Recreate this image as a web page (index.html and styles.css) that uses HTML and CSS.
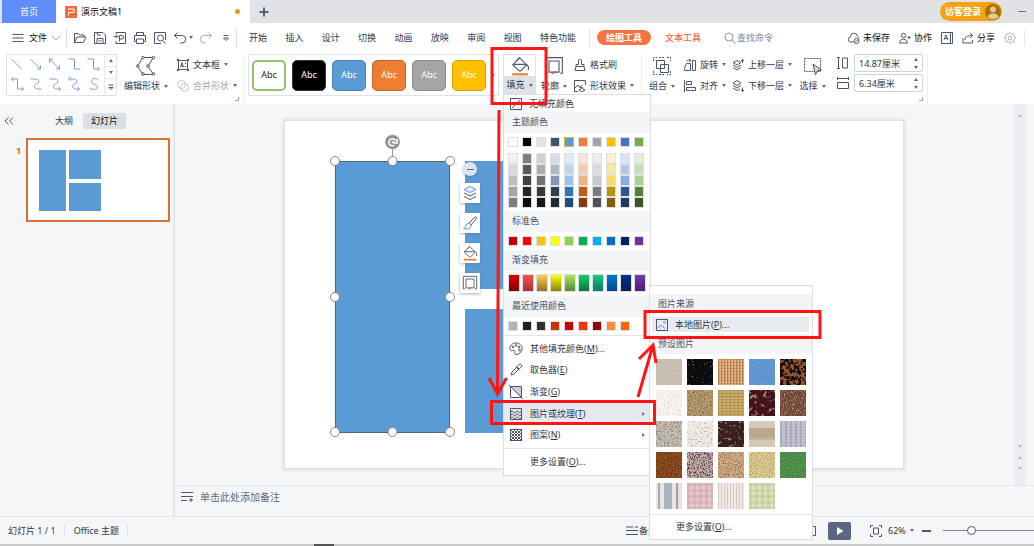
FILE: index.html
```html
<!DOCTYPE html>
<html lang="zh-CN">
<head>
<meta charset="utf-8">
<title>演示文稿1</title>
<link rel="stylesheet" href="styles.css">
</head>
<body>
<svg class="defs" aria-hidden="true">
  <symbol id="bucket" viewBox="0 0 18 18"><path d="M3 7.500h11.500M8.500 1.500 15 8l-5.500 5.500h-1L2.500 8zM15 7.500l1.500 2v3M6 4.500 8.500 2"/><path class="accent" d="M2 16.500h14"/></symbol>
  <symbol id="frame" viewBox="0 0 18 18"><path d="M4.500 4.500h9v10h-9zM1.500 15V1.500h15V15M1 15.500h2.500M14.500 15.500H17"/><path class="red" d="m7 16 4-2"/></symbol>
  <symbol id="layers" viewBox="0 0 16 16"><path class="blue tint" d="m8 1.500 6 3-6 3-6-3z"/><path d="m2 8 6 3 6-3M2 11.500l6 3 6-3"/></symbol>
  <symbol id="picture" viewBox="0 0 12 12"><path d="M.5.500h11v11H.5z"/><path class="blue" d="m2 9 2.500-3L9 9.500"/><circle class="blue" cx="8.500" cy="3.500" r="1"/></symbol>
</svg>

<header class="tabbar">
  <button class="home-tab">首页</button>
  <div class="doc-tab">
    <svg class="logo" viewBox="0 0 12 12"><rect width="12" height="12" rx="1"/><path d="M3 3h6v3.500H3.500V9.500"/></svg>
    <span>演示文稿1</span><i class="dirty"></i>
  </div>
  <button class="new-tab" aria-label="新建"><svg class="ico s10" viewBox="0 0 10 10"><path d="M5 .5v9M.5 5h9"/></svg></button>
  <div class="window-tools">
    <button class="login">访客登录<svg viewBox="0 0 16 16"><circle class="av-bg" cx="8" cy="8" r="8"/><circle class="av" cx="8" cy="5.500" r="3"/><path class="av" d="M2.500 13c1-5 10-5 11 0a8 8 0 0 1-11 0z"/></svg></button>
    <button class="minimize" aria-label="最小化"></button>
  </div>
</header>

<nav class="menubar">
  <button class="file"><svg class="ico s12" viewBox="0 0 12 12"><path d="M.5 2.500h11M.5 6h11M.5 9.500h11"/></svg>文件<svg class="ico s8 pale" viewBox="0 0 8 8"><path d="m.5 2.500 3.500 3.500L7.500 2.500"/></svg></button>
  <div class="quick">
    <button aria-label="打开"><svg class="ico s14" viewBox="0 0 14 14"><path d="M1.500 11.500v-9h3.500l1.500 1.500h4.500v2M1.500 11.500l2.500-5.500h9l-2.500 5.500z"/></svg></button>
    <button aria-label="保存"><svg class="ico s14" viewBox="0 0 14 14"><path d="M1.500 12.500v-11h8.500l2.500 2.500v8.500zM4 12.500V7.500h6v5M4.500 1.500v2.500h3.500M5.500 10h3"/></svg></button>
    <button aria-label="输出为PDF"><svg class="ico s14" viewBox="0 0 14 14"><path d="M3 3V1.500h9.500v11H3V10M.5 5.500h4M3 3.500l2 2-2 2M6.500 10.500V4.500h2.500a1.500 1.500 0 0 1 0 3.500H6.500"/></svg></button>
    <button aria-label="打印"><svg class="ico s14" viewBox="0 0 14 14"><path d="M3.500 4.500v-3h7v3M3.500 10.500h-2v-6h11v6h-2M3.500 8h7v4.500h-7z"/></svg></button>
    <button aria-label="打印预览"><svg class="ico s14" viewBox="0 0 14 14"><path d="M12.500 9V1.500h-11v11H8M9.500 9.500l3 3"/><circle cx="7.500" cy="7" r="3"/></svg></button>
    <button class="undo" aria-label="撤销"><svg class="ico s14" viewBox="0 0 14 14"><path d="M4.500 1.500 1.500 4.500l3 3M1.500 4.500h7.500a3.500 3.500 0 0 1 0 7.500H7"/></svg><i class="caret"></i></button>
    <button aria-label="恢复"><svg class="ico s14 pale" viewBox="0 0 14 14"><path d="m9.500 1.500 3 3-3 3M12.500 4.500H5a3.500 3.500 0 0 0 0 7.500h2"/></svg></button>
    <button class="quick-more" aria-label="更多"><svg class="ico s8" viewBox="0 0 8 8"><path d="M1.500 1.500h5M1.500 4 4 6.500 6.500 4z"/></svg></button>
  </div>
  <div class="menus">
    <button>开始</button><button>插入</button><button>设计</button><button>切换</button><button>动画</button><button>放映</button><button>审阅</button><button>视图</button><button>特色功能</button>
  </div>
  <div class="context">
    <button class="pill">绘图工具</button><button class="text-tool">文本工具</button>
    <label class="search"><svg class="ico s12" viewBox="0 0 12 12"><circle cx="5" cy="5" r="4"/><path d="m8 8 3.500 3.500"/></svg><input placeholder="查找命令" aria-label="查找命令"></label>
  </div>
  <div class="account">
    <button><svg class="ico s12" viewBox="0 0 12 12"><path d="M5.500 10H3a2.500 2.500 0 0 1-.5-5 3.500 3.500 0 0 1 7-.5A2.500 2.500 0 0 1 11 6.500"/><circle cx="8.500" cy="9" r="2.500"/><path d="m7 10.500 3-3"/></svg>未保存</button>
    <button><svg class="ico s12" viewBox="0 0 12 12"><circle cx="4.500" cy="3.500" r="2.200"/><path d="M.5 11c0-5 8-5 8 0zM8.500 5.500h3M10 4v3"/></svg>协作</button>
    <button aria-label="字体"><svg class="ico s12" viewBox="0 0 12 12"><path d="M.5.5h11v11H.5zM9.500.5v11M3 8l2-5 2 5M3.500 6.500h3"/></svg></button>
    <button><svg class="ico s12" viewBox="0 0 12 12"><path d="M1 6v5h9.500V8M3 8c0-3 2-4.500 7-4.500M8 1l2.800 2.500L8 6"/></svg>分享</button>
    <button aria-label="设置"><svg class="ico s12 pale" viewBox="0 0 12 12"><path d="M6 .7 7.600 2l2.100 0 .6 2 1.200 2-1.200 2-.6 2-2.100 0L6 11.300 4.400 10l-2.100 0-.6-2L.5 6l1.200-2 .6-2 2.100 0z"/><circle cx="6" cy="6" r="2"/></svg></button>
  </div>
</nav>

<section class="ribbon">
  <div class="shape-gallery">
    <svg class="lines" viewBox="0 0 96 40">
      <path d="m4 4 10 10M23 4l10 10m0-3.500v3.500h-3.500M42 4l10 10m0-3.500v3.500h-3.500M42 7.500V4h3.500M61 4h6v10h6M80 4h6v10h6m-2-2 2 2-2 2M4 24h6v10h6m-2-2 2 2-2 2M6 22 4 24l2 2M23 24h4c6 0 5 4 2 5s-3 5 2 5h3M42 24h4c6 0 5 4 2 5s-3 5 2 5h3m-2-2 2 2-2 2M61 24h4c6 0 5 4 2 5s-3 5 2 5h3m-2-2 2 2-2 2M63 22l-2 2 2 2M91 25c-3-3-8-1-7 2s6 2 6 5-5 3-8 1"/>
    </svg>
    <div class="spin"><button aria-label="上"><i class="caret up"></i></button><button aria-label="下"><i class="caret"></i></button><button aria-label="更多形状"><svg class="ico s8" viewBox="0 0 8 8"><path d="M1.500 2h5M2 4.500 4 6.500 6 4.500z"/></svg></button></div>
  </div>
  <button class="big"><svg class="ico s20" viewBox="0 0 20 20"><path d="M7 1.500h10.500L12 10l5.500 8.500H7L1.500 10z"/><g class="dot"><circle cx="7" cy="1.500" r="1.300"/><circle cx="17.500" cy="1.500" r="1.300"/><circle cx="12" cy="10" r="1.300"/><circle cx="17.500" cy="18" r="1.300"/><circle cx="7" cy="18" r="1.300"/><circle cx="1.800" cy="10" r="1.300"/></g></svg><span>编辑形状<i class="caret"></i></span></button>
  <div class="stack ruled">
    <button><svg class="ico s12" viewBox="0 0 12 12"><path d="M1.500 1.500h9v9h-9zM3.500 8.500l1.500-5 1.500 5M4 7h2M8.500 4v1M8.500 7v1"/><path d="M0 .5h2M.5 0v2M10 .5h2M11.500 0v2M0 11.500h2M.5 10v2M10 11.500h2M11.500 10v2"/></svg>文本框<i class="caret"></i></button>
    <button class="disabled" disabled><svg class="ico s12" viewBox="0 0 12 12"><circle cx="4.500" cy="4.500" r="4"/><circle cx="7.500" cy="7.500" r="4"/></svg>合并形状<i class="caret"></i></button>
    <i class="corner"></i>
  </div>
  <div class="style-col">
    <div class="styles">
      <button class="st s-outline">Abc</button><button class="st s-black">Abc</button><button class="st s-blue">Abc</button><button class="st s-orange">Abc</button><button class="st s-gray">Abc</button><button class="st s-yellow">Abc</button>
      <i class="caret"></i>
    </div>
  </div>
  <button class="big fill-btn"><svg class="ico s20"><use href="#bucket"/></svg><span>填充<i class="caret"></i></span></button>
  <button class="big"><svg class="ico s20"><use href="#frame"/></svg><span>轮廓<i class="caret"></i></span></button>
  <div class="stack ruled">
    <button><svg class="ico s12" viewBox="0 0 12 12"><path d="M4.500 5.500V1.500a1.500 1.500 0 0 1 3 0v4h2.500v2H2v-2zM2 7.500l-1 4h10l-1-4"/></svg>格式刷</button>
    <button><svg class="ico s12" viewBox="0 0 12 12"><path d="M11.500 5V.5H.5v11H4M1 8l3-3 2 3 2-3M8 7l1 2 2 1-2 1-1 1.500-1-1.500-2-1 2-1z"/></svg>形状效果<i class="caret"></i></button>
  </div>
  <button class="big"><svg class="ico s20" viewBox="0 0 20 20"><path d="M4.500 4.500h8v8h-8zM8.500 8.500h8v8h-8z"/><path class="dash" d="M1.500 5V1.500H5M15 1.500h3.500V5M1.500 15v3.500H5M18.500 15v3.500H15M7 1.500h6M7 18.500h6"/></svg><span>组合<i class="caret"></i></span></button>
  <div class="stack">
    <button><svg class="ico s12" viewBox="0 0 12 12"><path d="M6.500 4.500v7h-6v-2l2-5zM8.500 1.500h3v10h-3zM2.500 2.500c1-2 3-2 4.500-1M5 3l2-1.500L5.500 0"/></svg>旋转<i class="caret"></i></button>
    <button><svg class="ico s12" viewBox="0 0 12 12"><path d="M.5 0v12M2.500 1.500h5v3h-5zM2.500 7.500h9v3h-9z"/></svg>对齐<i class="caret"></i></button>
  </div>
  <div class="stack">
    <button><svg class="ico s12" viewBox="0 0 12 12"><path d="m5 1.500 4 2-4 2.500-4-2.500zM1 6l4 2.500L9 6M1 8.500 5 11l4-2.500M10.500 4V.5M9 2 10.500.5 12 2"/></svg>上移一层<i class="caret"></i></button>
    <button><svg class="ico s12" viewBox="0 0 12 12"><path d="m5 .5 4 2.500-4 2.500L1 3zM1 5.500 5 8l4-2.500M1 8l4 2.500L8 9M10.500 7.500v4M9 10l1.500 1.500L12 10"/></svg>下移一层<i class="caret"></i></button>
  </div>
  <button class="big"><svg class="ico s20" viewBox="0 0 20 20"><path class="dash" d="M1.500 2.500h16v13h-16z"/><path class="pointer" d="m10 8 8.500 6-4 .8-2 4z"/></svg><span>选择<i class="caret"></i></span></button>
  <div class="size-col ruled">
    <label><svg class="ico s12" viewBox="0 0 12 12"><path d="M0 .5h3M0 11.500h3M1.500.5v11M5.500 1h5v10h-5z"/></svg><input value="14.87厘米" aria-label="高度"><span class="updown"><i class="caret up"></i><i class="caret"></i></span></label>
    <label><svg class="ico s12" viewBox="0 0 12 12"><path d="M.5 0v3M11.500 0v3M.5 1.500h11M.5 5.500h11v6H.5z"/></svg><input value="6.34厘米" aria-label="宽度"><span class="updown"><i class="caret up"></i><i class="caret"></i></span></label>
    <i class="corner"></i>
  </div>
</section>

<main class="workspace">
  <aside class="side">
    <div class="side-head"><button class="collapse" aria-label="收起"><svg class="ico s10" viewBox="0 0 10 10"><path d="M4.500 1.500 1 5l3.500 3.500M9 1.500 5.500 5 9 8.500"/></svg></button><button class="side-tab">大纲</button><button class="side-tab on">幻灯片</button></div>
    <div class="thumb-row"><b>1</b><div class="thumb"><i class="t1"></i><i class="t2"></i><i class="t3"></i></div></div>
  </aside>
  <div class="editor">
    <div class="canvas">
      <div class="slide">
        <div class="shape a"></div><div class="shape b"></div><div class="shape c"></div>
        <svg class="handles" viewBox="0 0 130 314">
          <path class="stem" d="M64.500 20v18"/><rect x="7.500" y="38.500" width="114" height="271"/>
          <circle class="rot" cx="64.500" cy="19" r="7"/><path class="rot-a" d="M67.500 18a3.500 3.500 0 1 0-1 4M69 16v4h-4"/><circle class="pt" cx="64.500" cy="19" r="1"/>
          <g class="h"><circle cx="7" cy="38" r="4.500"/><circle cx="64.500" cy="38" r="4.500"/><circle cx="122" cy="38" r="4.500"/><circle cx="7" cy="174" r="4.500"/><circle cx="122" cy="174" r="4.500"/><circle cx="7" cy="309" r="4.500"/><circle cx="64.500" cy="309" r="4.500"/><circle cx="122" cy="309" r="4.500"/></g>
        </svg>
        <div class="float">
          <button class="minus" aria-label="收起"></button>
          <button aria-label="层"><svg class="ico s16"><use href="#layers"/></svg></button>
          <button aria-label="画笔"><svg class="ico s16" viewBox="0 0 16 16"><path d="M7 8 13 2c1-1 2 .5 1.500 1.500L9 10z"/><path class="blue" d="M7 8c-3 0-2.500 4-5.500 5.500C5 14.500 9 14 9 10z"/></svg></button>
          <button aria-label="填充"><svg class="ico s16"><use href="#bucket"/></svg></button>
          <button aria-label="轮廓"><svg class="ico s16"><use href="#frame"/></svg></button>
        </div>
      </div>
      <div class="scroll"><i class="caret up"></i><span></span><i class="caret"></i><i class="caret up"></i><i class="caret"></i></div>
    </div>
    <div class="notes"><svg class="ico s12" viewBox="0 0 12 12"><path d="M0 1.500h12M0 5.500h12M0 9.500h6M10 7v4M8 9h4"/></svg>单击此处添加备注</div>
  </div>
</main>

<footer class="status">
  <span class="cell">幻灯片 1 / 1</span><span class="cell">Office 主题</span>
  <div class="views">
    <button class="remark"><svg class="ico s12" viewBox="0 0 12 12"><path d="M0 2h7M0 5.500h12M0 9.500h12M9 3l1.500-2L12 3"/></svg>备注</button>
    <button class="read" aria-label="阅读视图"><svg class="ico s12" viewBox="0 0 12 12"><path d="M.5 1.500h11v9H.5z"/></svg></button>
    <button class="play" aria-label="放映"><svg viewBox="0 0 10 10"><path d="m2 1 6.500 4L2 9z"/></svg></button>
    <button class="fit" aria-label="适应"><svg class="ico s12" viewBox="0 0 12 12"><path d="M.5 3V.5H3M9 .5h2.500V3M.5 9v2.500H3M11.500 9v2.500H9M3.500 3h5v6h-5z"/></svg></button>
    <button class="zoom">62%<i class="caret"></i></button>
    <button class="zoom-out" aria-label="缩小"></button>
    <input type="range" class="zoom-range" min="0" max="100" value="29" aria-label="缩放">
  </div>
</footer>
<div class="dock"><i></i></div>

<div class="menu fill-menu">
  <button class="nofill"><svg class="ico s12" viewBox="0 0 12 12"><path d="M.5.5h11v11H.5z"/><path class="red" d="m2 10 8-8"/></svg>无填充颜色</button>
  <h3>主题颜色</h3>
  <div class="swatches" data-palette="theme"></div>
  <div class="swatches shades" data-palette="shades"></div>
  <h3>标准色</h3>
  <div class="swatches" data-palette="standard"></div>
  <h3>渐变填充</h3>
  <div class="swatches grads" data-palette="gradient"></div>
  <h3>最近使用颜色</h3>
  <div class="swatches" data-palette="recent"></div>
  <div class="items">
    <button><svg class="ico s14" viewBox="0 0 14 14"><path d="M7 1C3 1 .8 4 .8 6.500c0 2 1.500 2.500 3 2s2.500.5 2 2 .5 2.500 2 2c3-.8 5.400-3 5.400-6C13.200 3.500 10.500 1 7 1z"/><circle cx="4" cy="5" r=".9"/><circle cx="7" cy="3.500" r=".9"/><circle cx="10" cy="5" r=".9"/><circle cx="10.500" cy="8" r=".9"/></svg><span>其他填充颜色(<u>M</u>)...</span></button>
    <button><svg class="ico s14" viewBox="0 0 14 14"><path d="M7.500 4.500 3 9l-1 3 3-1 4.500-4.500M6.500 3.500l4 4M8 4l2-2.500c1.500-1 3.500.5 2.500 2.500L10 6z"/></svg><span>取色器(<u>E</u>)</span></button>
    <button><svg class="ico s14" viewBox="0 0 14 14"><path class="shade" d="M1.500 1.500h11v11z"/><path d="M1.500 1.500h11v11h-11zM0 0l14 14"/></svg><span>渐变(<u>G</u>)</span></button>
    <button class="on"><svg class="ico s14" viewBox="0 0 14 14"><path d="M1.500 1.500h11v11h-11zM2 5q1.250-2 2.500 0t2.500 0 2.500 0 2.500 0M2 8q1.250-2 2.500 0t2.500 0 2.500 0 2.500 0M2 11q1.250-2 2.500 0t2.500 0 2.500 0 2.500 0"/></svg><span>图片或纹理(<u>T</u>)</span><i class="caret right"></i></button>
    <button><svg class="ico s14" viewBox="0 0 14 14"><path d="M1.500 1.500h11v11h-11zM1 4l3-3M1 7l6-6M1 10l9-9M1 13 13 1M4 13l9-9M7 13l6-6M10 13l3-3M10 1l3 3M7 1l6 6M4 1l9 9M1 1l12 12M1 4l9 9M1 7l6 6M1 10l3 3"/></svg><span>图案(<u>N</u>)</span><i class="caret right"></i></button>
  </div>
  <button class="more">更多设置(<u>O</u>)...</button>
</div>

<div class="menu pic-menu">
  <h3>图片来源</h3>
  <button class="local"><svg class="ico s12"><use href="#picture"/></svg><span>本地图片(<u>P</u>)...</span></button>
  <h3>预设图片</h3>
  <div class="textures"></div>
  <button class="more">更多设置(<u>O</u>)...</button>
</div>

<svg class="marks" viewBox="0 0 1034 546" aria-hidden="true">
  <path d="M492 48.500h54v55h-54zM491.500 401.500h163v22h-163zM645 311.500h175v26H645z"/>
  <path d="M499 110l-1.500 283M489 378l8.500 16 9-16M638 397l15-52M639 359l14-14 3 18"/>
</svg>
<script src="app.js"></script>
</body>
</html>
```

FILE: styles.css
```css
* { box-sizing: border-box; }
body {
  margin: 0; min-height: 100vh; display: flex; flex-direction: column; position: relative;
  overflow: hidden; background: #fff; color: #2f3747;
  font: 9px/14px "Noto Sans", "Noto Sans CJK SC", sans-serif;
}
button, input { font: inherit; color: inherit; border: 0; padding: 0; margin: 0; background: none; }
button { display: flex; align-items: center; white-space: nowrap; }
h3 { margin: 0; font: inherit; }
u { text-underline-offset: 1px; }
.defs { position: absolute; width: 0; height: 0; }

.ico { display: block; flex: none; fill: none; stroke: #4c556b; stroke-width: 1; }
.s8 { width: 8px; height: 8px; }
.s10 { width: 10px; height: 10px; }
.s12 { width: 12px; height: 12px; }
.s14 { width: 14px; height: 14px; }
.s16 { width: 16px; height: 16px; }
.s20 { width: 20px; height: 20px; }
.pale { stroke: #a9aeb8; }
.accent { stroke: #ed7d31; stroke-width: 2; }
.red { stroke: #f03c3c; }
.blue { stroke: #5b8ce8; }
.tint { fill: #e9f1ff; }
.dash { stroke-dasharray: 2 1; }
.dot { fill: #fff; }
.pointer { fill: #d5dae2; }
.shade { fill: #c9ced8; stroke: none; }

.caret { display: inline-block; flex: none; width: 0; height: 0; border: 2px solid transparent; border-top: 3px solid #5d6b86; border-bottom: 0; }
.caret.up { border-top: 0; border-bottom: 3px solid #5d6b86; }
.caret.right { border: 2px solid transparent; border-left: 3px solid #6c7890; border-right: 0; }

/* Tab bar */
.tabbar { display: flex; height: 23px; background: #e1e2e6; padding-left: 2px; }
.home-tab { width: 54px; justify-content: center; background: #5f8dfa; color: #fff; }
.doc-tab { display: flex; align-items: center; width: 194px; padding: 0 10px 0 9px; gap: 4px; background: #fff; color: #111; }
.logo { width: 12px; height: 12px; }
.logo rect { fill: #f06a40; }
.logo path { fill: none; stroke: #fff; stroke-width: 1; }
.dirty { margin-left: auto; width: 5px; height: 5px; border-radius: 50%; background: #e8990c; }
.new-tab { padding: 0 9px; }
.new-tab .ico { stroke-width: 2; stroke: #56617c; }
.window-tools { margin-left: auto; display: flex; align-items: center; }
.login { height: 19px; padding: 0 1px 0 5px; gap: 4px; border-radius: 10px; background: #f6a313; color: #fff; font-weight: 700; }
.login svg { width: 16px; height: 16px; }
.av-bg { fill: #a86e08; }
.av { fill: #e2c891; }
.minimize { width: 8px; height: 1px; background: #6b7588; margin: 0 8px 0 16px; }

/* Menu bar */
.menubar { display: flex; align-items: center; height: 29px; }
.file { gap: 5px; height: 18px; padding: 0 6px 0 12px; border-right: 1px solid #d9dce2; color: #111; }
.quick { display: flex; align-items: center; gap: 6px; height: 18px; padding: 0 6px; border-right: 1px solid #d9dce2; }
.undo { gap: 2px; }
.quick-more { padding-left: 3px; }
.menus { display: flex; justify-content: space-between; width: 353px; height: 18px; padding: 0 13px 0 12px; border-right: 1px solid #e0e2e7; }
.context { display: flex; align-items: center; margin-left: 7px; }
.pill { height: 15px; padding: 0 9px; border-radius: 8px; background: #f7733f; color: #fff; font-weight: 700; }
.text-tool { margin-left: 14px; color: #f0683a; font-weight: 500; }
.search { display: flex; align-items: center; margin-left: 23px; gap: 1px; }
.search .ico { stroke: #8a96ac; }
.search input { width: 50px; }
.search input::placeholder { color: #7b869b; opacity: 1; }
.account { display: flex; align-items: center; margin-left: auto; gap: 9px; padding-right: 8px; height: 16px; margin-right: 9px; border-right: 1px solid #e5e7eb; }
.account button { gap: 3px; color: #111; }

/* Ribbon */
.ribbon {
  display: grid; height: 52px; padding: 2px 0 0 6px;
  grid-template-columns: 111px 58px 69px 259px 33px 36px 70px 40px 48px 62px 41px 95px 1fr;
}
.ruled { border-right: 1px solid #eceef1; }
.shape-gallery { display: flex; height: 42px; border: 1px solid #dfe1e5; }
.lines { flex: 1; min-width: 0; fill: none; stroke: #7f9bd4; stroke-width: 1; }
.spin { display: grid; width: 12px; border-left: 1px solid #e6e8ec; }
.spin button { justify-content: center; border-bottom: 1px solid #e6e8ec; }
.spin button:last-child { border: 0; }
.big { flex-direction: column; align-items: center; height: 40px; padding-top: 2px; justify-content: space-between; }
.big span { display: flex; align-items: center; gap: 4px; line-height: 16px; }
.fill-btn { background: linear-gradient(#fff 21px, #dde2e8 21px); border: 1px solid #dde2e8; padding-top: 1px; }
.stack { position: relative; display: grid; grid-template-rows: 21px 21px; padding-left: 2px; align-content: start; }
.stack button { gap: 4px; }
.disabled { color: #a4a9b3; }
.disabled .ico { stroke: #c0c4cc; }
.corner { position: absolute; right: 4px; bottom: 3px; width: 4px; height: 4px; border: solid #9aa3b5; border-width: 0 1px 1px 0; }
.style-col { padding: 0 4px; }
.styles { display: flex; align-items: center; gap: 6px; height: 42px; padding-left: 3px; border: 1px solid #dfe1e5; }
.styles .caret { margin-left: -1px; }
.st { width: 34px; height: 31px; justify-content: center; border: 1px solid; border-radius: 5px; color: #fff; }
.s-outline { border: 2px solid #8fc36f; color: #222; }
.s-black { background: #000; border-color: #333; }
.s-blue { background: #5b9bd5; border-color: #4a83b8; }
.s-orange { background: #ed7d31; border-color: #c4682a; }
.s-gray { background: #a5a5a5; border-color: #8b8b8b; }
.s-yellow { background: #ffc000; border-color: #d3a106; }
.size-col { position: relative; display: flex; flex-direction: column; gap: 2px; padding: 0 5px 0 4px; }
.size-col label { position: relative; display: flex; align-items: center; gap: 5px; }
.size-col input { width: 69px; height: 18px; padding-left: 4px; border: 1px solid #ccd0d7; border-radius: 2px; }
.updown { position: absolute; right: 4px; display: grid; gap: 5px; }

/* Workspace */
.workspace { flex: 1; display: flex; background: #f5f6f8; }
.side { width: 175px; border-right: 2px solid #e3e5ee; }
.side-head { display: flex; align-items: center; padding: 9px 0 0 4px; }
.side-tab { padding: 0 10px; height: 16px; border-radius: 2px; }
.collapse { margin-right: 31px; }
.side-tab.on { background: #dadfe6; padding: 0 8px; color: #111; }
.thumb-row { display: flex; gap: 4px; margin-top: 9px; padding: 0 3px 0 16px; }
.thumb-row b { width: 6px; padding-top: 6px; color: #d0642b; }
.thumb { position: relative; flex: 1; height: 84px; border: 2px solid #da7038; background: #fff; }
.thumb i { position: absolute; background: #5b9bd5; }
.t1 { left: 11px; top: 10px; width: 27px; height: 61px; }
.t2 { left: 41px; top: 10px; width: 32px; height: 29px; }
.t3 { left: 41px; top: 43px; width: 32px; height: 28px; }
.editor { flex: 1; min-width: 0; display: flex; flex-direction: column; }
.canvas { flex: 1; display: flex; padding-right: 8px; }
.slide { position: relative; flex: 1; margin: 17px 111px 17px 110px; background: #fff; box-shadow: 0 0 3px 2px #dcdde0; }
.shape { position: absolute; background: #5b9bd5; }
.a { left: 50px; top: 40px; width: 115px; height: 272px; }
.b { left: 180px; top: 40px; width: 142px; height: 128px; }
.c { left: 180px; top: 188px; width: 142px; height: 124px; }
.handles { position: absolute; left: 43px; top: 2px; width: 130px; height: 314px; overflow: visible; fill: none; stroke: #51657a; }
.handles .stem { stroke: #999; }
.handles .rot { fill: #8f8f8f; stroke: #aaa; }
.handles .rot-a { stroke: #fff; stroke-width: 1.5; }
.handles .pt { fill: #fff; stroke: none; }
.handles .h { fill: #fff; stroke: #858585; }
.float { position: absolute; left: 175px; top: 41px; display: flex; flex-direction: column; align-items: center; gap: 10px; }
.float button { width: 20px; height: 20px; justify-content: center; background: #fff; box-shadow: 0 1px 3px #5a6b8088; }
.float .minus { width: 14px; height: 14px; border-radius: 50%; background: #dbe6f0; margin-bottom: -3px; }
.minus::after { content: ""; width: 7px; height: 1px; background: #667; }
.scroll { display: flex; flex-direction: column; align-items: center; gap: 8px; width: 12px; padding: 10px 0 15px; background: #eceef3; }
.scroll span { flex: 1; }
.scroll .caret { opacity: .4; }
.notes { display: flex; align-items: center; gap: 7px; height: 31px; padding: 0 6px 8px; border-top: 1px solid #dfe2ea; font-size: 10px; color: #626b7c; }

/* Status bar */
.status { display: flex; align-items: center; height: 28px; padding-left: 8px; background: #f5f6f8; border-top: 1px solid #e0e3ea; }
.cell { padding-right: 8px; margin-right: 9px; line-height: 12px; border-right: 1px solid #dde0e6; }
.views { display: flex; align-items: center; margin-left: auto; }
.remark { gap: 1px; margin-right: 147px; }
.read { margin-right: 12px; }
.play { width: 23px; height: 18px; justify-content: center; border-radius: 2px; background: #5c6683; margin-right: 19px; }
.play svg { width: 10px; height: 10px; fill: #fff; }
.fit { margin-right: 6px; }
.zoom { gap: 4px; width: 27px; }
.zoom-out { width: 9px; height: 2px; background: #4c556b; margin: 0 12px 0 7px; }
.zoom-range { appearance: none; width: 91px; height: 10px; }
.zoom-range::-webkit-slider-runnable-track { height: 1px; background: #7d8596; }
.zoom-range::-webkit-slider-thumb { appearance: none; width: 9px; height: 9px; margin-top: -4px; border: 1px solid #4c556b; border-radius: 50%; background: #fff; }
.dock { height: 2px; background: #c9c9c9; padding-left: 314px; }
.dock i { display: block; width: 20px; height: 2px; background: #555; }

/* Drop-down menus */
.menu { position: absolute; background: #fff; border: 1px solid #dadde2; }
.menu h3 { background: #f3f4f6; color: #4a5262; padding-left: 8px; height: 21px; line-height: 20px; }
.fill-menu { left: 503px; top: 94px; width: 148px; }
.nofill { height: 17px; padding-left: 6px; gap: 7px; }
.swatches { display: grid; grid-template-columns: repeat(10, 10px); gap: 4px; padding: 4px 0 4px 4px; }
.swatches button { height: 10px; border: 1px solid #dcdfe3; }
.swatches .picked { border-color: #f0b030; }
.shades { padding: 2px 0 3px 4px; row-gap: 0; }
.shades button { height: 11px; }
.grads { grid-template-columns: repeat(10, 12px); gap: 2px; padding: 3px 0 4px 4px; }
.grads button { height: 18px; }
.items { height: 114px; display: flex; flex-direction: column; padding: 2px 0; border: solid #e2e4e8; border-width: 1px 0; }
.items button { flex: 1; gap: 7px; padding: 0 5px; }
.items .on { background: #e5e9ee; }
.items .right { margin-left: auto; }
.more { height: 26px; padding-left: 26px; }
.pic-menu { left: 649px; top: 285px; width: 164px; padding-top: 8px; }
.pic-menu h3 { height: 20px; }
.pic-menu .more { height: 24px; }
.local { width: 157px; height: 15px; margin: 3px 2px 2px; padding-left: 4px; gap: 7px; background: #e7ebef; }
.textures { display: grid; grid-template-columns: repeat(5, 26px); gap: 5px; padding: 5px 6px 5px; border-bottom: 1px solid #e2e4e8; }
.textures button { height: 26px; }
.textures svg { width: 26px; height: 26px; }
.band { background: linear-gradient(#d8cabb 7px, #baa890 7px 17px, #c4b3a0 17px 19px, #d6c6b6 19px); }
.weave { background: repeating-linear-gradient(#a56c3a66 0 1px, #0000 1px 3px), repeating-linear-gradient(90deg, #8c552577 0 1px, #0000 1px 2px, #fff3 2px 3px), #dcab76; }
.burlap { background: repeating-linear-gradient(#96743a66 0 1px, #0000 1px 3px), repeating-linear-gradient(90deg, #96743a66 0 1px, #0000 1px 4px), #cbab68; }
.plaid-gray { background: repeating-linear-gradient(#9fa1b866 0 1px, #0000 1px 3px), repeating-linear-gradient(90deg, #8588a066 0 2px, #0000 2px 5px), #c5c5cf; }
.ticking { background: linear-gradient(90deg, #e9e5e1 2px, #a6a9ac 2px 4px, #ece5e0 4px 8px, #a9b3c1 8px 16px, #ece5e0 16px 20px, #9da1a6 20px 22px, #e8e2de 22px); }
.plaid-pink { background: repeating-linear-gradient(#cc96a355 0 3px, #0000 3px 6px), repeating-linear-gradient(90deg, #cc96a355 0 3px, #0000 3px 6px), #e6c9cc; }
.pinstripe { background: repeating-linear-gradient(90deg, #d9c6bf 0 1px, #f1e9e4 1px 3px); }
.plaid-green { background: repeating-linear-gradient(#b1bf7b55 0 3px, #0000 3px 6px), repeating-linear-gradient(90deg, #b1bf7b55 0 3px, #0000 3px 6px), #dfe2c0; }
.marks { position: absolute; left: 0; top: 0; width: 1034px; height: 546px; pointer-events: none; fill: none; stroke: #ff1515; stroke-width: 3; }
```

FILE: app.js
```js
const palettes = {
  theme: "#ffffff #000000 #e7e6e6 #44546a #5b9bd5 #ed7d31 #a5a5a5 #ffc000 #4472c4 #70ad47",
  shades: "#f2f2f2 #7f7f7f #d0cece #d6dce5 #deebf7 #fbe5d6 #ededed #fff2cc #dae3f3 #e2f0d9 " +
    "#d9d9d9 #595959 #afabab #adb9ca #bdd7ee #f8cbad #dbdbdb #ffe699 #b4c7e7 #c5e0b4 " +
    "#bfbfbf #404040 #767171 #8497b0 #9dc3e6 #f4b183 #c9c9c9 #ffd966 #8faadc #a9d18e " +
    "#a6a6a6 #262626 #3b3838 #333f50 #2e75b6 #c55a11 #7c7c7c #bf9000 #2f5597 #548235 " +
    "#7f7f7f #0d0d0d #171717 #222a35 #1f4e79 #843c0c #525252 #7f6000 #203864 #385723",
  standard: "#c00000 #ff0000 #ffc000 #ffff00 #92d050 #00b050 #00b0f0 #0070c0 #002060 #7030a0",
  recent: "#b4b4b4 #202020 #303030 #cc3300 #cc0000 #ff3300 #990000 #ff8c42 #ff6600"
};
const gradients = ["#e60000,#800000", "#ff4d4d,#a83232", "#ffd045,#91702a", "#ffff00,#858500", "#a6e858,#5c8538",
  "#13ce66,#0b7540", "#14cd75,#0a7570", "#0079d1,#004a8b", "#003090,#0b1f5c", "#7b32b0,#4d206f"];

function swatch(parent, background, label) {
  const b = document.createElement("button");
  b.style.background = background;
  b.setAttribute("aria-label", label);
  parent.append(b);
  return b;
}
for (const name in palettes) {
  const parent = document.querySelector(`[data-palette=${name}]`);
  palettes[name].split(" ").forEach((c, i) => {
    const b = swatch(parent, c, c);
    if (name === "theme" && i === 4) b.className = "picked";
  });
}
const gradRow = document.querySelector("[data-palette=gradient]");
gradients.forEach(g => swatch(gradRow, `linear-gradient(${g})`, g));

// Each noise texture: base colour, grain colour, x and y frequency, contrast, threshold.
const textures = [
  ["#cbc3b4", "#b0a695", .8, .8, 2, .9], ["#0c0c0c", "#c8c8c8", .6, .6, 7, 4.8],
  "weave", ["#669cd6", "#4f85c4", .8, .8, 3, 1.3],
  ["#915330", "#120b08", .28, .28, 10, 4.6], ["#f7f4f2", "#ddd5cf", .6, .6, 4, 2.1],
  ["#bda178", "#79603e", .8, .8, 3, 1.3], "burlap",
  ["#43121a", "#a7897e", .22, .22, 6, 3.4], ["#6b4436", "#c09883", .9, .5, 3, 1.4],
  ["#c8c1b5", "#8a8072", .6, .6, 3, 1.3], ["#eee9e2", "#a89f90", .5, .5, 5, 2.9],
  ["#38201f", "#a27b6c", .3, .3, 6, 3.6], "band", "plaid-gray",
  ["#935222", "#54290c", .8, .8, 3, 1.3], ["#c5b1ae", "#4f3436", .8, .8, 4, 1.8],
  ["#d1ad89", "#835d3a", .8, .8, 3, 1.4], ["#dccd92", "#a38e4c", .8, .8, 3, 1.4],
  ["#56964f", "#38753c", .8, .8, 3, 1.3], "ticking", "plaid-pink", "pinstripe", "plaid-green"
];
const grid = document.querySelector(".textures");
textures.forEach((t, i) => {
  const b = document.createElement("button");
  b.setAttribute("aria-label", "纹理 " + (i + 1));
  if (typeof t === "string") b.className = t;
  else {
    const [base, ink, fx, fy, k, cut] = t;
    b.innerHTML = `<svg viewBox="0 0 26 26"><filter id="n${i}" x="0" y="0" width="1" height="1" color-interpolation-filters="sRGB">
      <feTurbulence type="fractalNoise" baseFrequency="${fx} ${fy}" numOctaves="2" seed="${i + 3}"/>
      <feColorMatrix values="0 0 0 0 0 0 0 0 0 0 0 0 0 0 0 ${k} 0 0 0 ${-cut}" result="m"/>
      <feFlood flood-color="${ink}"/><feComposite in2="m" operator="in"/></filter>
      <rect width="26" height="26" fill="${base}"/><rect width="26" height="26" filter="url(#n${i})"/></svg>`;
  }
  grid.append(b);
});
```
